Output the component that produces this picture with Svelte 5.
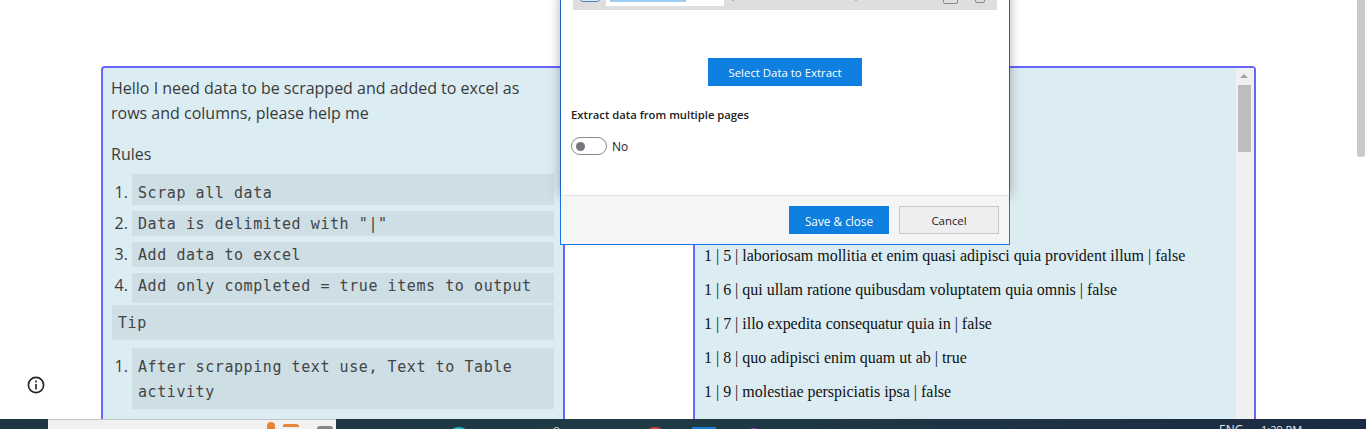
<script>
	const rules = ['Scrap all data', 'Data is delimited with "|"', 'Add data to excel', 'Add only completed = true items to output'];
	const rows = [
		'1 | 1 | delectus aut autem | false',
		'1 | 2 | quis ut nam facilis et officia qui | false',
		'1 | 3 | fugiat veniam minus | false',
		'1 | 4 | et porro tempora | true',
		'1 | 5 | laboriosam mollitia et enim quasi adipisci quia provident illum | false',
		'1 | 6 | qui ullam ratione quibusdam voluptatem quia omnis | false',
		'1 | 7 | illo expedita consequatur quia in | false',
		'1 | 8 | quo adipisci enim quam ut ab | true',
		'1 | 9 | molestiae perspiciatis ipsa | false'
	];
	let multiple = false;
</script>

<div class="page">
	<main class="content">
		<section class="panel left">
			<p class="intro">Hello I need data to be scrapped and added to excel as rows and columns, please help me</p>
			<p class="rules-title">Rules</p>
			<ol class="rules">
				{#each rules as rule, i}
					<li>
						<code class:first={i === 0} class:last={i === rules.length - 1}>{rule}</code>
					</li>
				{/each}
			</ol>
			<code class="tip">Tip</code>
			<ol class="tips">
				<li><code>After scrapping text use, Text to Table activity</code></li>
			</ol>
		</section>

		<section class="panel right">
			<div class="rows">
				{#each rows as row}
					<p>{row}</p>
				{/each}
			</div>
			<div class="scrollbar">
				<span class="arrow"></span>
				<span class="thumb"></span>
			</div>
		</section>
	</main>

	<footer class="taskbar">
		<div class="search">
			<span class="fox one"></span>
			<span class="fox two"></span>
			<span class="bin"></span>
		</div>
		<span class="app cyan"></span>
		<span class="app pale"></span>
		<span class="app red"></span>
		<span class="app blue"></span>
		<span class="app purple"></span>
		<span class="lang">ENG</span>
		<span class="time">1:29 PM</span>
	</footer>

	<!-- dialog over the panels, its top is cut by the window -->
	<div class="dialog">
		<div class="dialog-body">
			<div class="preview">
				<span class="preview-btn"></span>
				<span class="preview-input"><span class="selection"></span></span>
				<span class="tick tick-a"></span>
				<span class="tick tick-b"></span>
				<span class="preview-icon"></span>
				<span class="preview-icon small"></span>
			</div>
			<div class="select-row">
				<button class="primary select">Select Data to Extract</button>
			</div>
			<div class="multi-label">Extract data from multiple pages</div>
			<div class="toggle-row">
				<button class="toggle" aria-label="Toggle" onclick={() => (multiple = !multiple)}>
					<span class="knob"></span>
				</button>
				<span class="toggle-text">No</span>
			</div>
		</div>
		<div class="dialog-footer">
			<button class="primary save">Save &amp; close</button>
			<button class="cancel">Cancel</button>
		</div>
	</div>

	<button class="info" aria-label="Info">
		<svg width="18" height="18" viewBox="0 0 18 18" fill="none" stroke="#222" stroke-width="1.6">
			<circle cx="9" cy="9" r="7.6" />
			<path d="M9 8v5.4" />
			<path d="M9 4.6v1.8" />
		</svg>
	</button>

	<div class="page-thumb"></div>
</div>

<style>
	:global(body) {
		margin: 0;
		background: #fff;
	}
	.page {
		position: relative;
		display: flex;
		flex-direction: column;
		height: 429px;
		overflow: hidden;
	}
	.content {
		display: flex;
		flex: 1;
		min-height: 0;
		gap: 128px;
		padding: 66px 0 0 101px;
		overflow: hidden;
	}
	.panel {
		box-sizing: border-box;
		border: 2px solid #6666ff;
		border-radius: 4px;
		background: #dcecf3;
		height: 500px;
	}
	.left {
		width: 464px;
		padding: 8px 9px 0 9px;
		font: 16px/25px "Open Sans", sans-serif;
		color: #3a3a3a;
	}
	.left p {
		margin: 0 0 0 -1px;
	}
	.rules-title {
		padding-top: 16px;
	}
	.left ol {
		margin: 0;
		padding: 0 0 0 20px;
	}
	.left li {
		margin-bottom: 6px;
		line-height: 16px;
	}
	.left li:last-child {
		margin-bottom: 0;
	}
	.rules {
		margin-top: 7px !important;
	}
	code {
		display: block;
		box-sizing: border-box;
		padding: 2px 6px 0;
		background: #cddee5;
		font: 15px/23px "DejaVu Sans Mono", monospace;
		letter-spacing: 0.57px;
		color: #444;
	}
	code.first {
		padding-top: 8px;
	}
	code.last {
		padding-bottom: 5px;
	}
	.tip {
		height: 35px;
		padding-top: 0;
		line-height: 36px;
		margin: 2px 0 8px;
	}
	.tips code {
		padding: 7px 6px 4px;
		line-height: 25px;
	}
	.right {
		display: flex;
		width: 563px;
	}
	.rows {
		flex: 1;
		padding: 0 9px;
		font: 16px/18px "Liberation Serif", serif;
		letter-spacing: -0.014px;
		color: #111;
	}
	.rows p {
		margin: 0;
		padding-top: 16px;
	}
	.rows p:first-child {
		padding-top: 43px;
	}
	.scrollbar {
		display: flex;
		flex-direction: column;
		align-items: flex-start;
		box-sizing: border-box;
		width: 18px;
		padding-left: 2px;
		background: #f0f0f0;
	}
	.arrow {
		margin: 6px 0 7px 2px;
		border: 4px solid transparent;
		border-top: 0;
		border-bottom: 4px solid #a3a3a3;
	}
	.thumb {
		width: 13px;
		height: 67px;
		background: #bdbdbd;
	}
	.taskbar {
		position: relative;
		flex: none;
		height: 10px;
		background: linear-gradient(90deg, #1f3640, #1f3a44 50%, #1c2a44);
		overflow: hidden;
	}
	.search {
		position: absolute;
		left: 48px;
		top: 0;
		width: 288px;
		height: 10px;
		box-sizing: border-box;
		border-top: 1px solid #c4c4c4;
		background: #f1f1f1;
	}
	.fox {
		position: absolute;
		background: #e8833a;
	}
	.fox.one {
		left: 219px;
		top: 2px;
		width: 8px;
		height: 9px;
		border-radius: 4px 4px 0 0;
	}
	.fox.two {
		left: 235px;
		top: 4px;
		width: 16px;
		height: 3px;
		border-radius: 3px 6px 0 0;
	}
	.bin {
		position: absolute;
		left: 269px;
		top: 6px;
		width: 16px;
		height: 4px;
		border-radius: 3px 3px 0 0;
		background: #888;
	}
	.app {
		position: absolute;
		top: 8px;
		height: 24px;
	}
	.cyan {
		left: 447px;
		width: 24px;
		border-radius: 50%;
		background: #18b9c9;
	}
	.pale {
		left: 553px;
		width: 5px;
		height: 5px;
		border: 1px solid #e6e6e6;
		border-radius: 50%;
	}
	.red {
		left: 643px;
		width: 24px;
		border-radius: 50%;
		background: #d7453f;
	}
	.blue {
		left: 692px;
		width: 24px;
		background: #1a7fd4;
	}
	.purple {
		left: 745px;
		top: 9px;
		width: 18px;
		border-radius: 50%;
		background: #9a3dc8;
	}
	.lang,
	.time {
		position: absolute;
		top: 3px;
		font: 12px/16px "Open Sans", sans-serif;
		color: #e8e8e8;
	}
	.lang {
		left: 1219px;
	}
	.time {
		left: 1261px;
		font-size: 11px;
	}
	.dialog {
		position: absolute;
		left: 560px;
		top: -10px;
		width: 450px;
		height: 255px;
		box-sizing: border-box;
		display: flex;
		flex-direction: column;
		border: 1px solid #1a73e8;
		background: #fff;
		font: 11.4px/16px "Open Sans", sans-serif;
		color: #222;
	}
	.dialog-body {
		flex: 1;
		padding: 0 12px 0 10px;
		box-shadow: 0 0 12px rgba(0, 0, 0, 0.35);
		background: #fff;
	}
	.preview {
		position: relative;
		height: 19px;
		margin: 0 0 0 2px;
		background: #dedede;
	}
	.preview-btn {
		position: absolute;
		left: 7px;
		top: 0;
		width: 20px;
		height: 11px;
		box-sizing: border-box;
		border: 1px solid #4a86d0;
		border-radius: 3px;
		background: #e6e6e6;
	}
	.preview-input {
		position: absolute;
		left: 33px;
		top: 0;
		width: 118px;
		height: 15px;
		background: #fff;
	}
	.selection {
		position: absolute;
		left: 4px;
		top: 0;
		width: 76px;
		height: 11px;
		background: #9ccdf5;
	}
	.tick {
		position: absolute;
		top: 0;
		width: 2px;
		height: 10px;
		background: #b4b4b4;
	}
	.tick-a {
		left: 159px;
	}
	.tick-b {
		left: 282px;
	}
	.preview-icon {
		position: absolute;
		left: 370px;
		top: 0;
		width: 15px;
		height: 13px;
		box-sizing: border-box;
		border: 1px solid #888;
		border-radius: 2px;
	}
	.preview-icon.small {
		left: 402px;
		width: 10px;
		height: 12px;
	}
	button {
		font: inherit;
		border: 0;
		padding: 0;
		cursor: pointer;
	}
	.select-row {
		display: flex;
		justify-content: center;
		margin-top: 48px;
		padding-left: 2px;
	}
	.primary {
		background: #0f80e0;
		color: #fff;
	}
	.select {
		width: 154px;
		height: 28px;
		padding-top: 2px;
	}
	.multi-label {
		margin-top: 21px;
		font-weight: 600;
		font-size: 11.25px;
	}
	.toggle-row {
		display: flex;
		align-items: center;
		gap: 5px;
		margin-top: 14px;
	}
	.toggle-text {
		padding-top: 2px;
		font-size: 12px;
	}
	.toggle {
		display: flex;
		align-items: center;
		width: 36px;
		height: 18px;
		box-sizing: border-box;
		padding-left: 4px;
		border: 1px solid #8a8a8a;
		border-radius: 9px;
		background: #fff;
	}
	.knob {
		width: 9px;
		height: 9px;
		border-radius: 50%;
		background: #76767c;
	}
	.dialog-footer {
		display: flex;
		justify-content: flex-end;
		gap: 10px;
		height: 49px;
		box-sizing: border-box;
		padding: 10px 10px 0 0;
		border-top: 1px solid #e1e3e3;
		background: #f4f6f6;
		position: relative;
	}
	.save,
	.cancel {
		width: 100px;
		height: 28px;
		padding-top: 2px;
	}
	.save {
		font-size: 11.8px;
	}
	.cancel {
		box-sizing: border-box;
		border: 1px solid #c8c8c8;
		background: #eeeef0;
		color: #222;
	}
	.info {
		position: absolute;
		left: 27px;
		top: 376px;
		width: 18px;
		height: 18px;
		background: none;
	}
	.page-thumb {
		position: absolute;
		right: 1px;
		top: 0;
		width: 8px;
		height: 157px;
		background: #c9c9c9;
		border-radius: 0 0 3px 3px;
	}
</style>
